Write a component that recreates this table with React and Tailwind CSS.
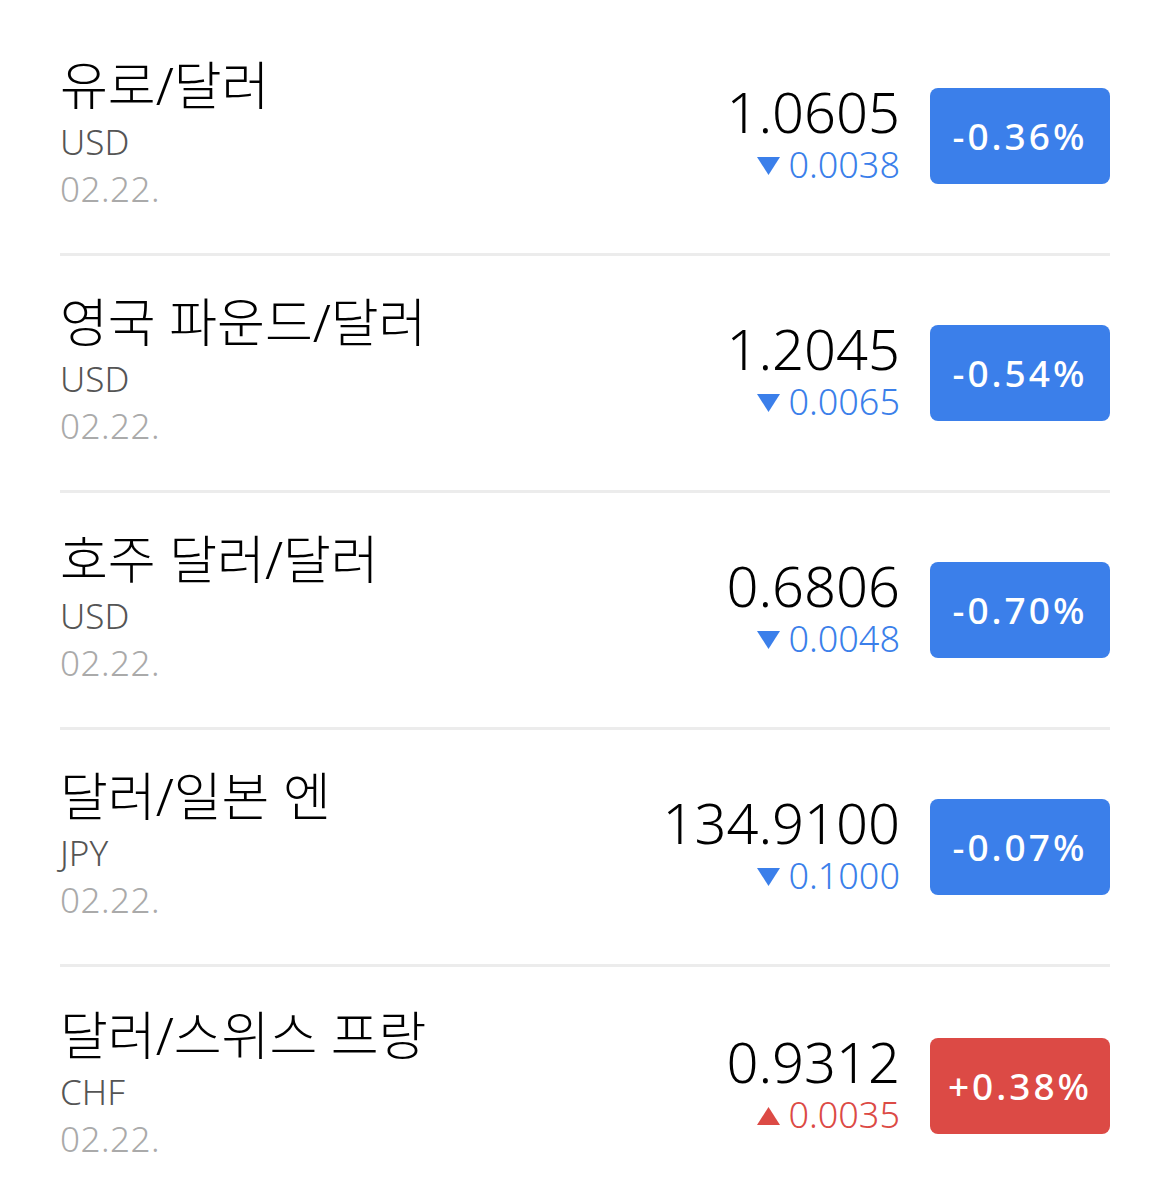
import React from "react";

const rows = [
  { name: "유로/달러", cur: "USD", price: "1.0605", diff: "0.0038", pct: "-0.36%", up: false },
  { name: "영국 파운드/달러", cur: "USD", price: "1.2045", diff: "0.0065", pct: "-0.54%", up: false },
  { name: "호주 달러/달러", cur: "USD", price: "0.6806", diff: "0.0048", pct: "-0.70%", up: false },
  { name: "달러/일본 엔", cur: "JPY", price: "134.9100", diff: "0.1000", pct: "-0.07%", up: false },
  { name: "달러/스위스 프랑", cur: "CHF", price: "0.9312", diff: "0.0035", pct: "+0.38%", up: true },
];

function Triangle({ up }) {
  return (
    <svg width="23" height="18" viewBox="0 0 23 18" className="mr-[8px] mt-[2px]">
      {up ? (
        <path d="M11.5 0 L23 18 L0 18 Z" fill="#dc4a45" />
      ) : (
        <path d="M0 0 L23 0 L11.5 18 Z" fill="#3b7fea" />
      )}
    </svg>
  );
}

function Row({ item, last }) {
  return (
    <div
      className={
        "flex items-center justify-between h-[237px] " +
        (last ? "" : "border-b-[3px] border-[#ececec]")
      }
    >
      <div className="flex flex-col pb-[8px]">
        <div className="text-[52px] leading-[64px] text-black font-light">{item.name}</div>
        <div className="text-[35px] leading-[50px] text-[#555] font-light">{item.cur}</div>
        <div className="text-[35px] leading-[44px] text-[#aaa] font-light tracking-[0.5px]">02.22.</div>
      </div>
      <div className="flex items-center gap-[30px]">
        <div className="flex flex-col items-end">
          <div className="text-[56px] leading-[58px] text-black font-light">{item.price}</div>
          <div
            className={
              "flex items-center text-[36px] leading-[50px] font-light " +
              (item.up ? "text-[#dc4a45]" : "text-[#3b7fea]")
            }
          >
            <Triangle up={item.up} />
            {item.diff}
          </div>
        </div>
        <div
          className={
            "w-[180px] h-[96px] rounded-[8px] flex items-center justify-center text-white text-[37px] font-medium tracking-[3px] " +
            (item.up ? "bg-[#dc4a45]" : "bg-[#3b7fea]")
          }
        >
          {item.pct}
        </div>
      </div>
    </div>
  );
}

export default function App() {
  return (
    <div
      className="w-[1170px] h-[1195px] bg-white px-[60px] pt-[19px]"
      style={{ fontFamily: '"Noto Sans", "Noto Sans CJK KR", sans-serif' }}
    >
      {rows.map((r, i) => (
        <Row key={i} item={r} last={i === rows.length - 1} />
      ))}
    </div>
  );
}
